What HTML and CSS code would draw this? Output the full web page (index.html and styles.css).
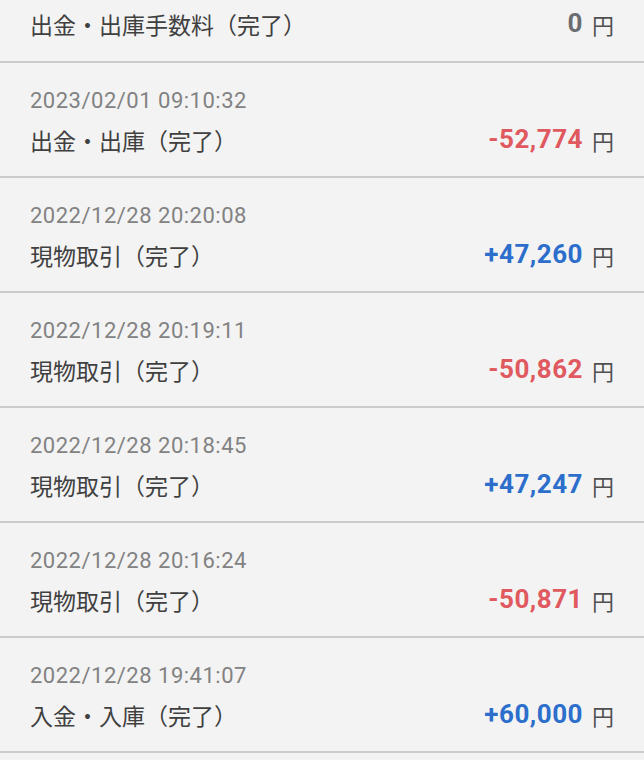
FILE: index.html
```html
<!DOCTYPE html>
<html lang="ja">
<head>
<meta charset="utf-8">
<link rel="stylesheet" href="styles.css">
</head>
<body>
<div class="list">
  <div class="item item-partial">
    <div class="main">
      <span class="title">出金・出庫手数料（完了）</span>
      <span class="amount"><span class="num zero">0</span><span class="yen">円</span></span>
    </div>
  </div>
  <div class="item">
    <div class="date">2023/02/01 09:10:32</div>
    <div class="main">
      <span class="title">出金・出庫（完了）</span>
      <span class="amount"><span class="num minus">-52,774</span><span class="yen">円</span></span>
    </div>
  </div>
  <div class="item">
    <div class="date">2022/12/28 20:20:08</div>
    <div class="main">
      <span class="title">現物取引（完了）</span>
      <span class="amount"><span class="num plus">+47,260</span><span class="yen">円</span></span>
    </div>
  </div>
  <div class="item">
    <div class="date">2022/12/28 20:19:11</div>
    <div class="main">
      <span class="title">現物取引（完了）</span>
      <span class="amount"><span class="num minus">-50,862</span><span class="yen">円</span></span>
    </div>
  </div>
  <div class="item">
    <div class="date">2022/12/28 20:18:45</div>
    <div class="main">
      <span class="title">現物取引（完了）</span>
      <span class="amount"><span class="num plus">+47,247</span><span class="yen">円</span></span>
    </div>
  </div>
  <div class="item">
    <div class="date">2022/12/28 20:16:24</div>
    <div class="main">
      <span class="title">現物取引（完了）</span>
      <span class="amount"><span class="num minus">-50,871</span><span class="yen">円</span></span>
    </div>
  </div>
  <div class="item">
    <div class="date">2022/12/28 19:41:07</div>
    <div class="main">
      <span class="title">入金・入庫（完了）</span>
      <span class="amount"><span class="num plus">+60,000</span><span class="yen">円</span></span>
    </div>
  </div>
</div>
</body>
</html>
```
FILE: styles.css
```css
html, body {
  margin: 0;
  padding: 0;
  background: #f3f3f3;
}
body {
  width: 644px;
  height: 760px;
  overflow: hidden;
  font-family: Roboto, "Noto Sans CJK JP", sans-serif;
}
.list {
  display: flex;
  flex-direction: column;
}
.item {
  display: flex;
  flex-direction: column;
  gap: 10px;
  height: 113px;
  box-sizing: content-box;
  padding: 0 30px;
  border-bottom: 2px solid #cbcbcb;
}
.item > .date {
  margin-top: 24px;
}
.item-partial {
  height: 61px;
}
.item-partial > .main {
  margin-top: 9px;
}
.date {
  font-size: 22px;
  line-height: 28px;
  letter-spacing: 0.5px;
  color: #828282;
}
.main {
  display: flex;
  align-items: center;
  justify-content: space-between;
  height: 30px;
}
.title {
  font-family: "Noto Sans CJK JP", sans-serif;
  font-size: 23px;
  line-height: 30px;
  color: #404040;
}
.amount {
  display: flex;
  align-items: center;
  gap: 9px;
}
.num {
  font-family: Roboto, sans-serif;
  font-weight: 700;
  font-size: 26px;
  letter-spacing: 0.5px;
  line-height: 30px;
  margin-top: -2px;
}
.zero { color: #6b6d70; }
.minus { color: #e0595e; }
.plus { color: #2c6ecb; }
.yen {
  font-family: "Noto Sans CJK JP", sans-serif;
  font-size: 22px;
  line-height: 30px;
  color: #505050;
}
```
